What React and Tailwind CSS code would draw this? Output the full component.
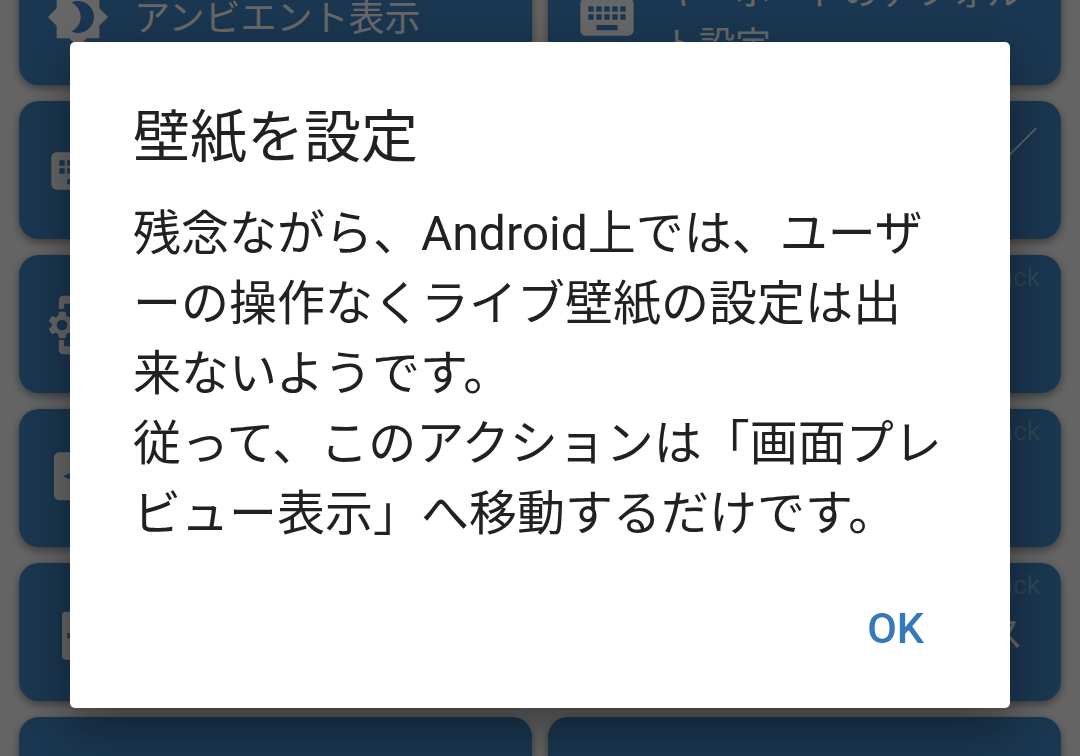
import { useState } from "react";
import { MdBrightness4, MdKeyboard } from "react-icons/md";

function PhoneCogIcon({ className }) {
  return (
    <svg viewBox="0 0 24 24" fill="currentColor" className={className}>
      <path d="M6.5 1H17a2 2 0 0 1 2 2v18a2 2 0 0 1-2 2H6.5a1.7 1.7 0 0 1-1.7-1.7V17.6h2V20H17V4H6.8v2H4.8V2.7A1.7 1.7 0 0 1 6.5 1z" />
      <path
        fillRule="evenodd"
        d="M4.9 7h2.4l.4 1.6.9.5 1.5-.6 1.2 2-1.3 1v1l1.3 1-1.2 2-1.5-.6-.9.5-.4 1.6H4.9l-.4-1.6-.9-.5-1.3.6-1.3-2 1.2-1v-1L1 10.5l1.3-2 1.3.6.9-.5zM6 10a2 2 0 1 0 0 4 2 2 0 0 0 0-4z"
      />
    </svg>
  );
}

function ScreenArrowIcon({ className }) {
  return (
    <svg viewBox="0 0 24 24" fill="currentColor" className={className}>
      <path
        fillRule="evenodd"
        d="M5 2h14a2 2 0 0 1 2 2v14a2 2 0 0 1-2 2H5a2 2 0 0 1-2-2V4a2 2 0 0 1 2-2zm1.4 9 5.6 2.6V12h5v-2h-5V8.4z"
      />
    </svg>
  );
}

function BatteryMinusIcon({ className }) {
  return (
    <svg viewBox="0 0 24 24" fill="currentColor" className={className}>
      <path
        fillRule="evenodd"
        d="M16.67 4H15V2H9v2H7.33A1.33 1.33 0 0 0 6 5.33v15.34C6 21.4 6.6 22 7.33 22h9.34A1.33 1.33 0 0 0 18 20.67V5.33C18 4.6 17.4 4 16.67 4zM16 14H8v-2h8z"
      />
    </svg>
  );
}

const actions = [
  { id: "ambient", label: "アンビエント表示", Icon: MdBrightness4 },
  { id: "default-keyboard", label: "キーボードのデフォルト設定", Icon: MdKeyboard },
  { id: "keyboard-select", label: "キーボード選択", Icon: MdKeyboard },
  { id: "keyboard-toggle", label: "キーボードの表示ON／非表示", Icon: MdKeyboard },
  { id: "phone-settings", label: "端末設定", Icon: PhoneCogIcon },
  { id: "phone-info", label: "端末情報", Icon: PhoneCogIcon, pack: true },
  { id: "screen-back", label: "画面切替", Icon: ScreenArrowIcon },
  { id: "screen-next", label: "画面移動", Icon: ScreenArrowIcon, pack: true },
  { id: "battery-saver", label: "省電力", Icon: BatteryMinusIcon },
  { id: "battery-service", label: "バッテリー用サービス", Icon: BatteryMinusIcon, pack: true },
  { id: "more-left" },
  { id: "more-right" },
];

function ActionCard({ label, Icon, pack }) {
  return (
    <button
      type="button"
      className="relative flex h-[138px] items-center gap-6 rounded-[20px] bg-[#4187c8] pl-[27px] pr-4 pt-px text-left text-white shadow-[0_3px_8px_rgba(0,0,0,0.4)]"
    >
      {Icon && <Icon className="size-16 shrink-0" />}
      {label && <span className="pt-1.5 text-[36px] leading-[53px]">{label}</span>}
      {pack && (
        <span className="absolute right-[21px] top-2 text-[26px] leading-7 text-[#69afd2]">
          Pack
        </span>
      )}
    </button>
  );
}

function WallpaperDialog({ onClose }) {
  return (
    <div className="fixed inset-0 flex items-center justify-center bg-black/60 px-[70px] pb-1.5">
      <div
        role="dialog"
        aria-modal="true"
        aria-labelledby="dialog-title"
        className="w-full rounded-[5px] bg-white pb-14 pl-[63px] pr-14 pt-16 text-[#212121] shadow-[0_20px_50px_rgba(0,0,0,0.4)]"
      >
        <h2 id="dialog-title" className="text-[57px] leading-16">
          壁紙を設定
        </h2>
        <p className="mt-[29px] text-[48px] leading-[70px]">
          残念ながら、Android上では、ユーザ
          <br />
          ーの操作なくライブ壁紙の設定は出
          <br />
          来ないようです。
          <br />
          従って、このアクションは「画面プレ
          <br />
          ビュー表示」へ移動するだけです。
        </p>
        <div className="mt-[55px] flex justify-end pr-[30px]">
          <button
            type="button"
            onClick={onClose}
            className="h-12 text-[43px] font-medium leading-12 text-[#3478bd]"
          >
            OK
          </button>
        </div>
      </div>
    </div>
  );
}

function App() {
  const [dialogOpen, setDialogOpen] = useState(true);

  return (
    <div
      lang="ja"
      className="h-screen overflow-hidden bg-[#fafafa] font-[Roboto,'Noto_Sans_CJK_JP',sans-serif]"
    >
      <main className="-mt-[53px] grid grid-cols-2 gap-4 px-[19px]">
        {actions.map((action) => (
          <ActionCard key={action.id} {...action} />
        ))}
      </main>
      {dialogOpen && <WallpaperDialog onClose={() => setDialogOpen(false)} />}
    </div>
  );
}

export default App;
